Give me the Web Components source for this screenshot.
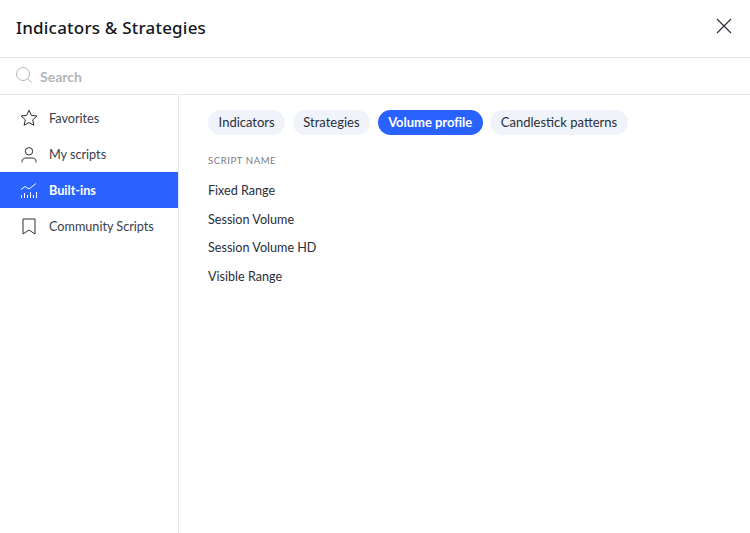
<!DOCTYPE html>
<html lang="en">
  <head>
    <meta charset="UTF-8" />
    <title>Indicators &amp; Strategies</title>
    <style>
      body {
        margin: 0;
        background: #fff;
        color: #131722;
        font-family: Lato, sans-serif;
      }
    </style>

    <template id="side-item-template">
      <style>
        :host {
          display: flex;
          align-items: center;
          height: 36px;
          padding-left: 20px;
          font-size: 12.7px;
          letter-spacing: -0.03px;
          color: #3a3e4a;
        }
        :host([active]) {
          background: #2962ff;
          color: #fff;
          font-weight: 700;
        }
        .icon {
          display: flex;
          width: 18px;
          height: 18px;
          margin-right: 11px;
        }
      </style>
      <span class="icon"><slot name="icon"></slot></span>
      <slot></slot>
    </template>

    <template id="pill-tab-template">
      <style>
        :host {
          display: flex;
          align-items: center;
          height: 25px;
          padding: 0 10.6px 1px;
          box-sizing: border-box;
          border-radius: 13px;
          background: #f0f3fa;
          color: #2a2e39;
          font-size: 13px;
        }
        :host([active]) {
          background: #2962ff;
          color: #fff;
          font-weight: 700;
          letter-spacing: -0.03px;
        }
      </style>
      <slot></slot>
    </template>

    <template id="script-row-template">
      <style>
        :host {
          display: flex;
          align-items: center;
          height: 28.67px;
          font-size: 12.6px;
          color: #2a2e39;
        }
      </style>
      <slot></slot>
    </template>

    <template id="indicators-dialog-template">
      <style>
        :host {
          display: flex;
          flex-direction: column;
          height: 533px;
        }
        header {
          display: flex;
          align-items: center;
          justify-content: space-between;
          height: 54px;
          padding: 0 18px 3px 16px;
          border-bottom: 1px solid #e6e8f0;
        }
        h1 {
          margin: 0;
          font-family: "Noto Sans", sans-serif;
          font-size: 17px;
          font-weight: 500;
          letter-spacing: 0.2px;
          color: #131722;
        }
        .close {
          display: flex;
          margin-top: -2px;
        }
        .search {
          display: flex;
          align-items: center;
          height: 36px;
          padding-left: 16px;
          border-bottom: 1px solid #e6e8f0;
          font-size: 14px;
          font-weight: 700;
          color: #b2b5be;
        }
        .search svg {
          margin-right: 8px;
          margin-top: -2px;
        }
        .search span {
          margin-top: 1px;
        }
        .body {
          display: flex;
          flex: 1;
          min-height: 0;
        }
        nav {
          width: 178px;
          padding-top: 5px;
          border-right: 1px solid #e6e8f0;
        }
        main {
          flex: 1;
          padding: 15px 29px 0;
        }
        .tabs {
          display: flex;
          gap: 7.4px;
        }
        .label {
          margin: 20px 0 9.3px;
          font-size: 9.5px;
          line-height: 12px;
          letter-spacing: 0.6px;
          color: #787b86;
        }
      </style>
      <header>
        <h1>Indicators &amp; Strategies</h1>
        <span class="close">
          <svg width="16" height="16" viewBox="0 0 16 16" fill="none" stroke="#2a2e39" stroke-width="1.2">
            <path d="M1 1l14 14M15 1L1 15" />
          </svg>
        </span>
      </header>
      <div class="search">
        <svg width="16" height="16" viewBox="0 0 16 16" fill="none" stroke="#b2b5be" stroke-width="1">
          <circle cx="7" cy="7" r="6.500" />
          <path d="M11.700 11.700l4 4" />
        </svg>
        <span>Search</span>
      </div>
      <div class="body">
        <nav><slot name="nav"></slot></nav>
        <main>
          <div class="tabs"><slot name="tabs"></slot></div>
          <div class="label">SCRIPT NAME</div>
          <slot></slot>
        </main>
      </div>
    </template>
  </head>

  <body>
    <indicators-dialog>
      <side-item slot="nav">
        <svg slot="icon" width="18" height="18" viewBox="0 0 18 18" fill="none" stroke="#2a2e39" stroke-width="1">
          <path d="M9 1.200l2.300 5.200 5.600.6-4.200 3.800 1.200 5.500L9 13.500l-4.900 2.800 1.200-5.500L1.100 7l5.600-.6z" />
        </svg>
        Favorites
      </side-item>
      <side-item slot="nav">
        <svg slot="icon" width="18" height="18" viewBox="0 0 18 18" fill="none" stroke="#2a2e39" stroke-width="1">
          <circle cx="9" cy="6.300" r="3.700" />
          <path d="M2 17.500v-1c0-2.500 2-3.500 4-3.500h6c2 0 4 1 4 3.500v1" />
        </svg>
        My scripts
      </side-item>
      <side-item slot="nav" active>
        <svg slot="icon" width="18" height="18" viewBox="0 0 18 18" fill="none" stroke="#fff" stroke-width="1">
          <path d="M1 8.500l4-3 4 2.500 7-5.500" />
          <path d="M1.500 17v-3M4.500 17v-5M7.500 17v-3M10.500 17v-6M13.500 17v-3M16.500 17v-6" />
        </svg>
        Built-ins
      </side-item>
      <side-item slot="nav">
        <svg slot="icon" width="18" height="18" viewBox="0 0 18 18" fill="none" stroke="#2a2e39" stroke-width="1">
          <path d="M3 2h12v15L9 13l-6 4z" />
        </svg>
        Community Scripts
      </side-item>

      <pill-tab slot="tabs">Indicators</pill-tab>
      <pill-tab slot="tabs">Strategies</pill-tab>
      <pill-tab slot="tabs" active>Volume profile</pill-tab>
      <pill-tab slot="tabs">Candlestick patterns</pill-tab>

      <script-row>Fixed Range</script-row>
      <script-row>Session Volume</script-row>
      <script-row>Session Volume HD</script-row>
      <script-row>Visible Range</script-row>
    </indicators-dialog>

    <script>
      // every element just clones its template into an open shadow root
      function define(name, templateId) {
        customElements.define(
          name,
          class extends HTMLElement {
            constructor() {
              super();
              const template = document.getElementById(templateId);
              const shadowRoot = this.attachShadow({ mode: 'open' });
              shadowRoot.appendChild(template.content.cloneNode(true));
            }
          }
        );
      }

      define('side-item', 'side-item-template');
      define('pill-tab', 'pill-tab-template');
      define('script-row', 'script-row-template');
      define('indicators-dialog', 'indicators-dialog-template');
    </script>
  </body>
</html>
